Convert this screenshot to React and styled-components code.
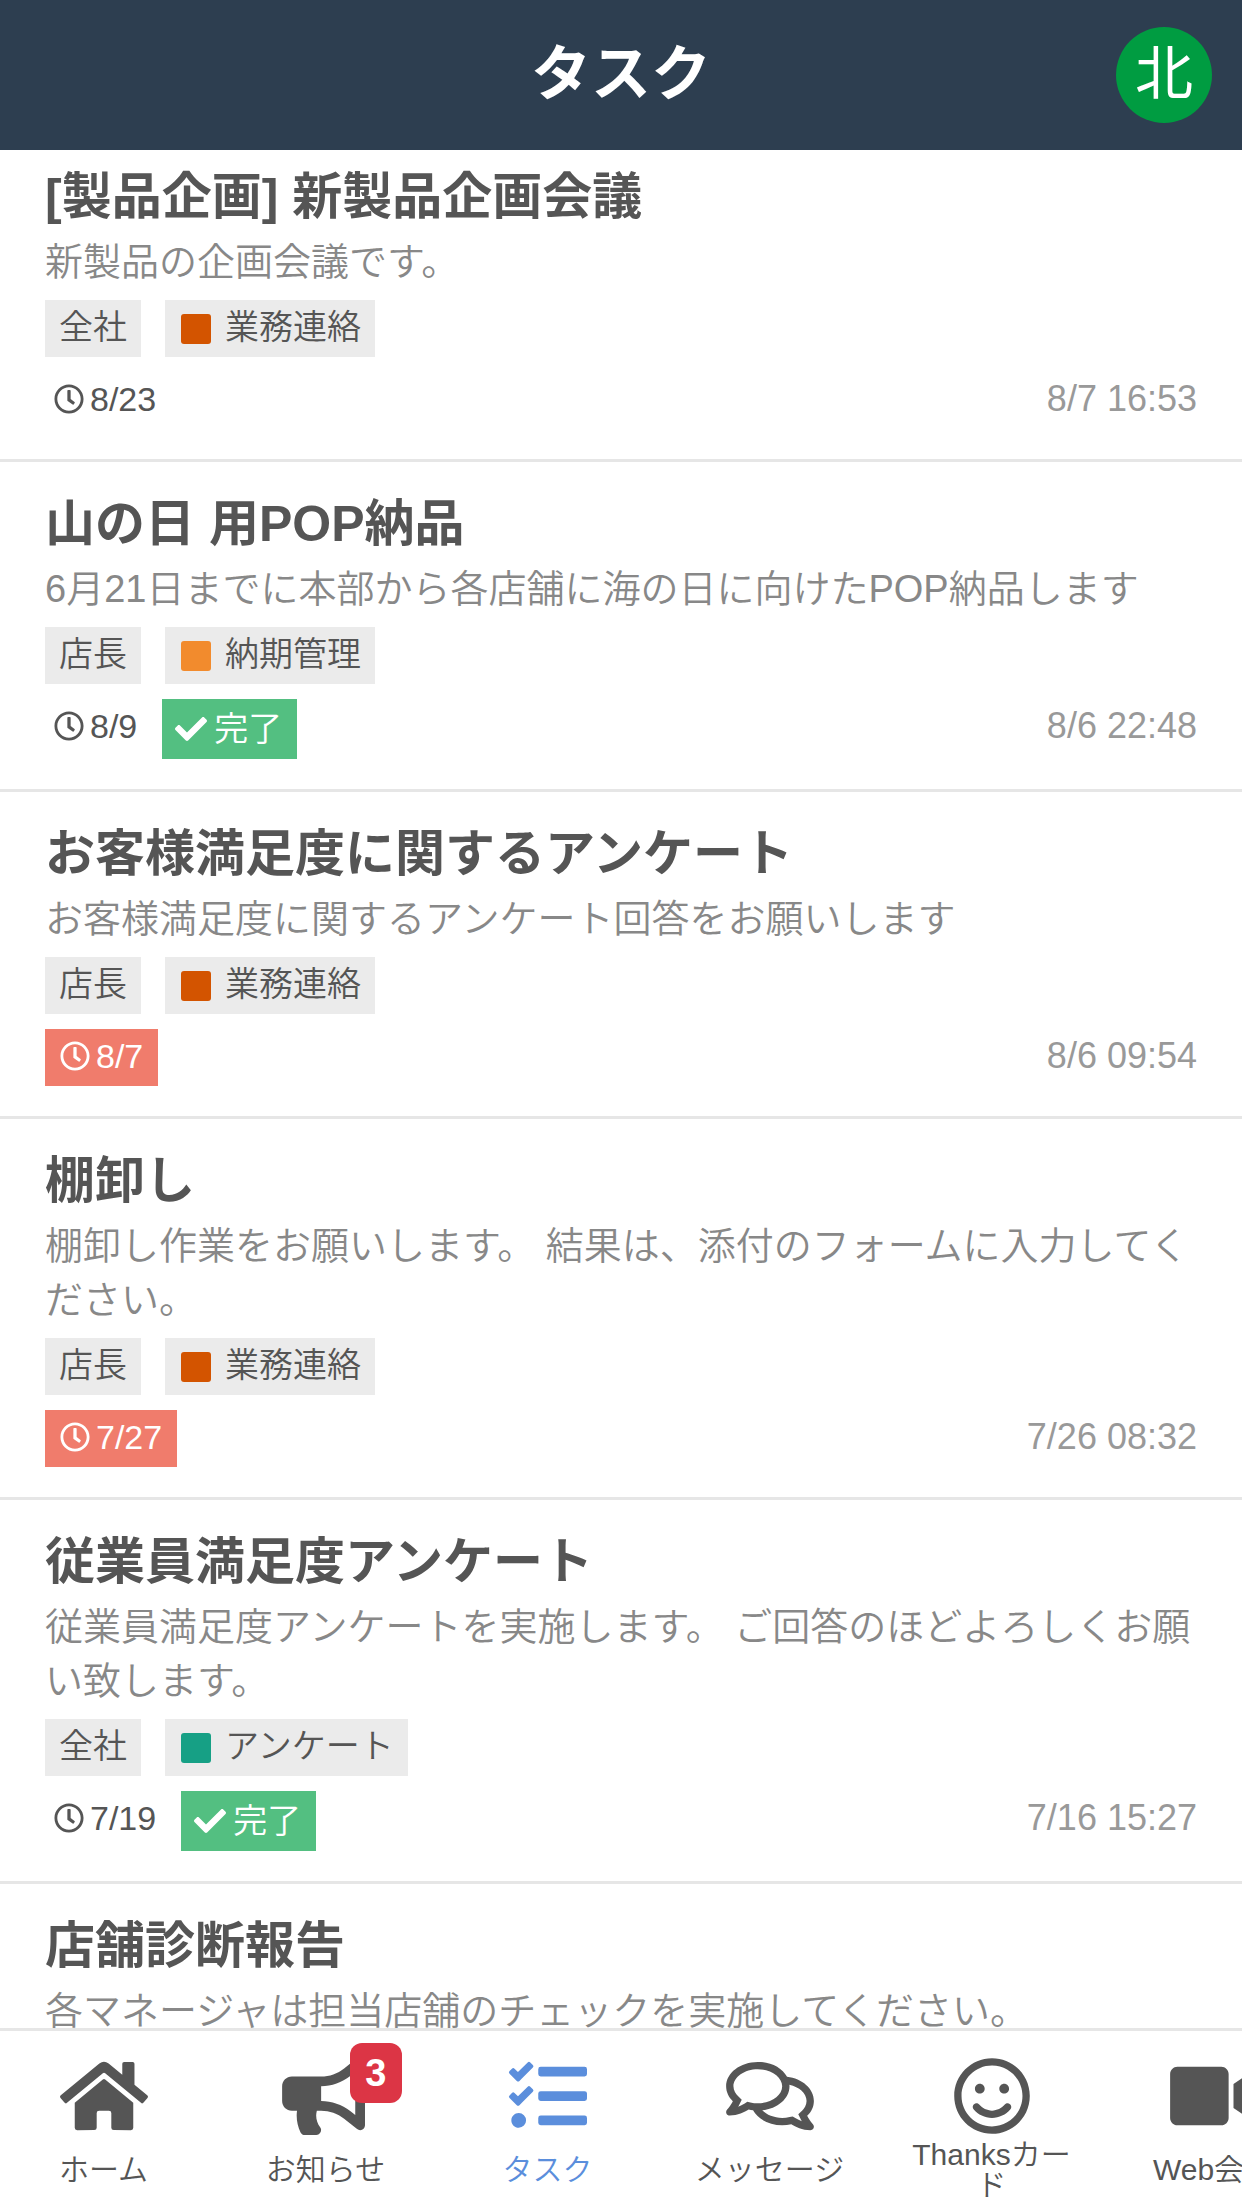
import React, { useLayoutEffect, useRef } from "react";
import styled, { createGlobalStyle } from "styled-components";
import {
    FaBullhorn,
    FaCheck,
    FaHome,
    FaRegClock,
    FaRegComments,
    FaRegSmile,
    FaTasks,
    FaVideo,
} from "react-icons/fa";

const GlobalStyle = createGlobalStyle`
    * {
        box-sizing: border-box;
    }
    body {
        margin: 0;
        color: #555;
        background-color: #fff;
        font-family: "Liberation Sans", "Noto Sans CJK JP", sans-serif;
        font-weight: 350;
    }
    button {
        font-family: inherit;
    }
`;

const Shell = styled.div`
    display: flex;
    flex-direction: column;
    height: 100vh;
    overflow: hidden;
`;

const Header = styled.header`
    display: grid;
    grid-template-columns: 1fr auto 1fr;
    align-items: center;
    flex: none;
    height: 150px;
    padding: 0 30px;
    color: #fff;
    background-color: #2d3e50;
`;

const PageTitle = styled.h1`
    grid-column: 2;
    margin: 0;
    font-size: 60px;
    line-height: 90px;
`;

const Avatar = styled.button`
    justify-self: end;
    width: 96px;
    height: 96px;
    padding: 0 0 3px;
    border: 0;
    border-radius: 50%;
    color: #fff;
    background-color: #009c41;
    font-size: 58px;
    line-height: 90px;
`;

const TaskList = styled.main`
    flex: 1;
    min-height: 0;
    overflow-y: auto;
    scrollbar-width: none;
`;

const TaskItem = styled.article`
    padding: 24px 45px 30px;
    border-bottom: 3px solid #e6e6e6;
`;

const TaskTitle = styled.h2`
    margin: 0;
    font-size: 50px;
    line-height: 76px;
`;

const Description = styled.p`
    margin: 0 0 11px;
    color: #888;
    font-size: 38px;
    line-height: 54px;
`;

const Tags = styled.div`
    display: flex;
    gap: 24px;
    margin-bottom: 15px;
`;

const Tag = styled.span`
    display: flex;
    align-items: flex-start;
    height: 57px;
    padding: 0 14px;
    background-color: #ebebeb;
    font-size: 34px;
    line-height: 54px;
`;

const Swatch = styled.span`
    width: 30px;
    height: 30px;
    margin: 14px 14px 0 2px;
    border-radius: 3px;
    background-color: ${(props) => props.$color};
`;

const StatusRow = styled.div`
    display: flex;
    align-items: flex-start;
    gap: 16px;
    font-size: 34px;
    line-height: 54px;
`;

const Due = styled.span`
    display: flex;
    align-items: center;
    gap: 6px;
    height: 57px;
    padding: 0 ${(props) => (props.$late ? 15 : 9)}px 3px;
    color: ${(props) => (props.$late ? "#fff" : "inherit")};
    background-color: ${(props) => (props.$late ? "#f07c6c" : "transparent")};
    svg {
        width: 30px;
        height: 30px;
    }
`;

const Done = styled.span`
    display: flex;
    align-items: center;
    gap: 7px;
    height: 60px;
    padding: 0 15px 0 13px;
    color: #fff;
    background-color: #53bf81;
    svg {
        width: 32px;
        height: 32px;
    }
`;

const Posted = styled.time`
    margin-left: auto;
    color: #999;
    font-size: 36px;
`;

const Nav = styled.nav`
    display: flex;
    flex: none;
    gap: 15px;
    height: 180px;
    overflow: hidden;
    border-top: 3px solid #e6e6e6;
    background-color: #fff;
`;

const NavLink = styled.a`
    display: flex;
    flex: none;
    flex-direction: column;
    align-items: center;
    width: 207px;
    padding: 26px 15px 0;
    color: ${(props) => (props.$active ? "#5b8edc" : "#555")};
    text-decoration: none;
`;

const NavIcon = styled.span`
    position: relative;
    height: 78px;
    svg {
        display: block;
        width: 88px;
        height: 78px;
    }
`;

const NavLabel = styled.span`
    display: flex;
    align-items: center;
    height: 60px;
    margin-top: 5px;
    font-size: 30px;
    line-height: 30px;
    text-align: center;
`;

const Badge = styled.span`
    position: absolute;
    top: -14px;
    right: -32px;
    padding: 0 15px;
    border-radius: 12px;
    color: #fff;
    background-color: #dc3545;
    font-size: 38px;
    font-weight: bold;
    line-height: 60px;
`;

const tasks = [
    {
        title: "[製品企画] 新製品企画会議",
        description: "新製品の企画会議です。",
        target: "全社",
        category: "業務連絡",
        color: "#d35400",
        due: "8/23",
        posted: "8/7 16:53",
    },
    {
        title: "山の日 用POP納品",
        description: "6月21日までに本部から各店舗に海の日に向けたPOP納品します",
        target: "店長",
        category: "納期管理",
        color: "#f28b2d",
        due: "8/9",
        done: true,
        posted: "8/6 22:48",
    },
    {
        title: "お客様満足度に関するアンケート",
        description: "お客様満足度に関するアンケート回答をお願いします",
        target: "店長",
        category: "業務連絡",
        color: "#d35400",
        due: "8/7",
        late: true,
        posted: "8/6 09:54",
    },
    {
        title: "棚卸し",
        description:
            "棚卸し作業をお願いします。 結果は、添付のフォームに入力してください。",
        target: "店長",
        category: "業務連絡",
        color: "#d35400",
        due: "7/27",
        late: true,
        posted: "7/26 08:32",
    },
    {
        title: "従業員満足度アンケート",
        description:
            "従業員満足度アンケートを実施します。 ご回答のほどよろしくお願い致します。",
        target: "全社",
        category: "アンケート",
        color: "#16a085",
        due: "7/19",
        done: true,
        posted: "7/16 15:27",
    },
    {
        title: "店舗診断報告",
        description: "各マネージャは担当店舗のチェックを実施してください。",
    },
];

const navItems = [
    { label: "ホーム", icon: FaHome },
    { label: "お知らせ", icon: FaBullhorn, count: 3 },
    { label: "タスク", icon: FaTasks, active: true },
    { label: "メッセージ", icon: FaRegComments },
    { label: "Thanksカード", icon: FaRegSmile },
    { label: "Web会議", icon: FaVideo },
];

const Task = ({ title, description, target, category, color, due, late, done, posted }) => (
    <TaskItem>
        <TaskTitle>{title}</TaskTitle>
        <Description>{description}</Description>
        {target && (
            <Tags>
                <Tag>{target}</Tag>
                <Tag>
                    <Swatch $color={color} />
                    {category}
                </Tag>
            </Tags>
        )}
        {due && (
            <StatusRow>
                <Due $late={late}>
                    <FaRegClock />
                    {due}
                </Due>
                {done && (
                    <Done>
                        <FaCheck />
                        完了
                    </Done>
                )}
                <Posted>{posted}</Posted>
            </StatusRow>
        )}
    </TaskItem>
);

const App = () => {
    const listRef = useRef(null);

    useLayoutEffect(() => {
        listRef.current.scrollTop = 15;
    }, []);

    return (
        <>
            <GlobalStyle />
            <Shell lang="ja">
                <Header>
                    <PageTitle>タスク</PageTitle>
                    <Avatar type="button">北</Avatar>
                </Header>
                <TaskList ref={listRef}>
                    {tasks.map((task) => (
                        <Task key={task.title} {...task} />
                    ))}
                </TaskList>
                <Nav>
                    {navItems.map(({ label, icon: Icon, count, active }) => (
                        <NavLink key={label} href="#" $active={active}>
                            <NavIcon>
                                <Icon />
                                {count && <Badge>{count}</Badge>}
                            </NavIcon>
                            <NavLabel>{label}</NavLabel>
                        </NavLink>
                    ))}
                </Nav>
            </Shell>
        </>
    );
};

export default App;
